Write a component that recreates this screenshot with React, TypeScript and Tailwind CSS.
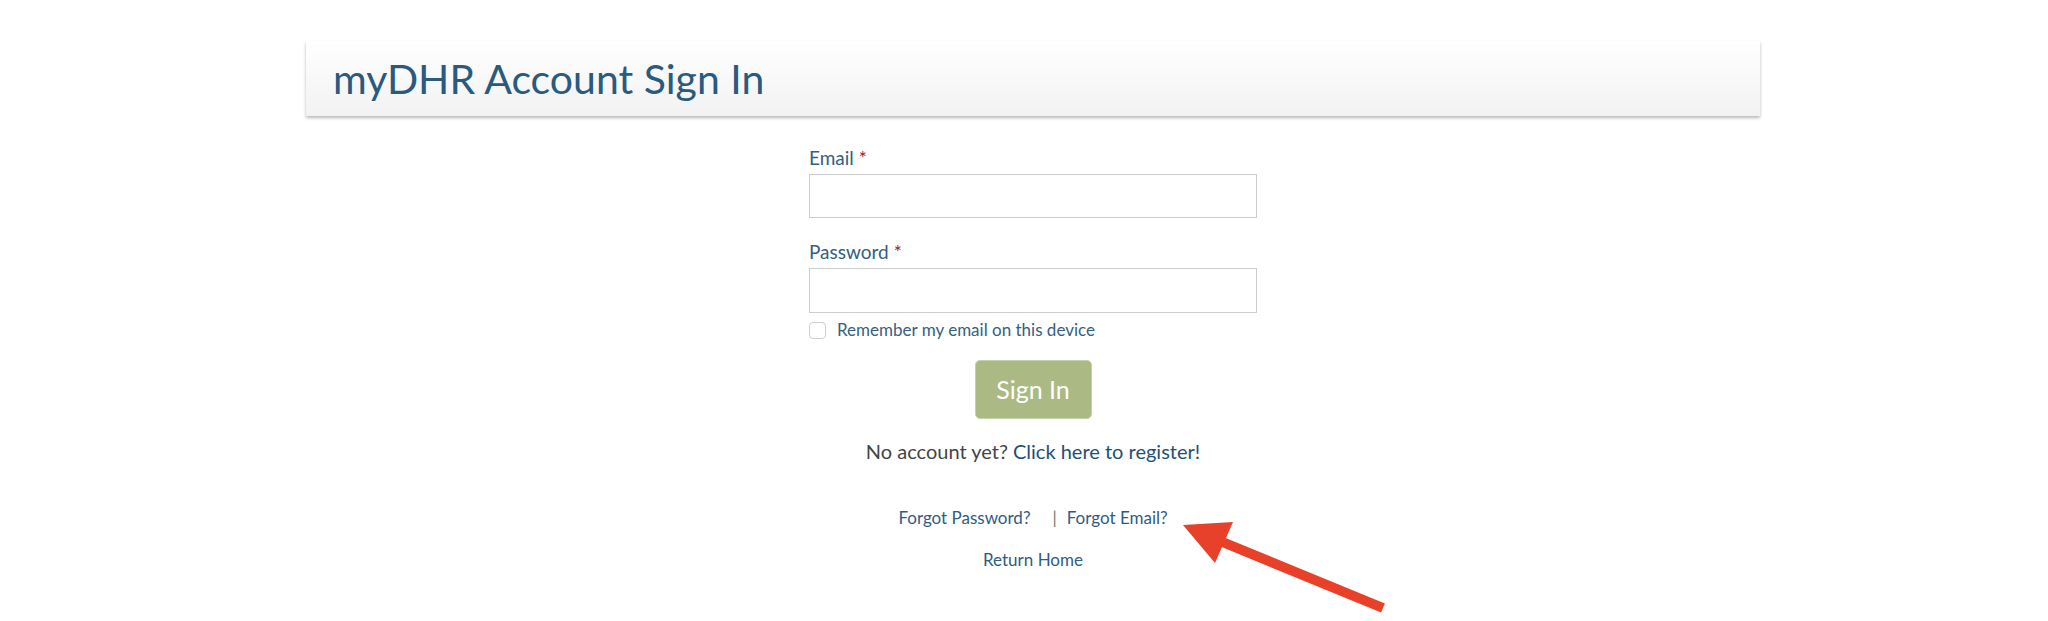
import React from "react";

export default function App() {
  return (
    <div className="relative min-h-[621px] w-full bg-white" style={{ fontFamily: "Lato, 'Open Sans', sans-serif" }}>
      <div className="flex justify-center pl-[18px] pt-[41px]">
        <div className="flex h-[75px] w-[1454px] items-center bg-gradient-to-b from-white to-[#f2f2f2] pl-[27px] shadow-[0_2px_3px_rgba(0,0,0,0.28)]">
          <h1 className="text-[41px] font-normal leading-none text-[#2a5a7e]">myDHR Account Sign In</h1>
        </div>
      </div>

      <div className="flex justify-center pl-[18px]">
        <div className="flex w-[448px] flex-col">
          <label className="mt-[30px] text-[19px] leading-[24px] text-[#35607f]">
            Email <span className="text-[#9b1c2e]">*</span>
          </label>
          <input className="mt-[4px] h-[44px] w-full border border-[#cccccc] bg-white outline-none" />
          <label className="mt-[22px] text-[19px] leading-[24px] text-[#35607f]">
            Password <span className="text-[#9b1c2e]">*</span>
          </label>
          <input type="password" className="mt-[4px] h-[45px] w-full border border-[#cccccc] bg-white outline-none" />
          <div className="mt-[7px] flex items-center gap-[11px]">
            <span className="h-[17px] w-[17px] rounded-[4px] border border-[#cfcfcf] bg-white"></span>
            <span className="text-[17px] leading-[20px] text-[#35607f]">Remember my email on this device</span>
          </div>
          <div className="mt-[20px] flex justify-center">
            <button className="h-[59px] w-[117px] rounded-[5px] border border-[#c7d1a8] bg-[#abba84] text-[25px] text-white">
              Sign In
            </button>
          </div>
          <p className="mt-[20px] text-center text-[20px] leading-[24px] text-[#444444]">
            No account yet? <a className="text-[#1f4f79]">Click here to register!</a>
          </p>
        </div>
      </div>

      <div className="flex justify-center pl-[18px]">
        <div className="flex flex-col items-center">
          <div className="mt-[45px] flex items-start text-[17px] leading-[20px] text-[#2e5c82]">
            <a>Forgot Password?</a>
            <span className="ml-[22px] mr-[10px] text-[#777777]">|</span>
            <a>Forgot Email?</a>
          </div>
          <a className="mt-[22px] text-[17px] leading-[20px] text-[#2e5c82]">Return Home</a>
        </div>
      </div>

      <svg className="absolute left-[1170px] top-[510px]" width="230" height="111" viewBox="0 0 230 111">
        <polygon points="13,15 63,12 45,53" fill="#e8412a" />
        <line x1="50" y1="31" x2="213" y2="98" stroke="#e8412a" strokeWidth="10" />
      </svg>
    </div>
  );
}
